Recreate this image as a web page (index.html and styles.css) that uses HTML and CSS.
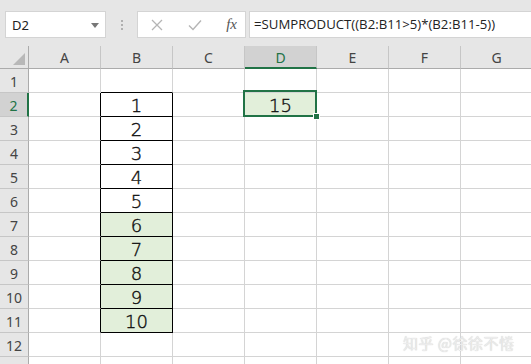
FILE: index.html
```html
<!DOCTYPE html>
<html lang="zh-CN">
<head>
    <meta charset="UTF-8">
    <title>SUMPRODUCT</title>
    <link rel="stylesheet" href="styles.css">
</head>
<body>
    <div class="toolbar">
        <div class="name-box">
            <span>D2</span>
            <svg class="drop" width="8" height="5" viewBox="0 0 8 5"><path d="M0 0h8L4 5z" fill="#777"/></svg>
        </div>
        <div class="grip"><i></i><i></i><i></i></div>
        <div class="buttons">
            <svg width="12" height="12" viewBox="0 0 12 12"><path d="M1 1l10 10M11 1L1 11" stroke="#b5b5b5" stroke-width="1.3"/></svg>
            <svg width="14" height="12" viewBox="0 0 14 12"><path d="M1 6.5l4 4L13 1.5" stroke="#b5b5b5" stroke-width="1.4" fill="none"/></svg>
            <span class="fx">fx</span>
        </div>
        <div class="formula">=SUMPRODUCT((B2:B11&gt;5)*(B2:B11-5))</div>
    </div>

    <div class="sheet">
        <div class="corner"><svg width="12" height="12" viewBox="0 0 12 12"><path d="M12 0v12H0z" fill="#b8b8b8"/></svg></div>
        <div class="col-head">A</div>
        <div class="col-head">B</div>
        <div class="col-head">C</div>
        <div class="col-head active">D</div>
        <div class="col-head">E</div>
        <div class="col-head">F</div>
        <div class="col-head">G</div>
    </div>
    <div class="sheet" id="rows"></div>

    <div class="watermark">知乎 @徐徐不惓</div>

    <script>
        // build rows 1-13, values 1..10 sit in B2:B11; row 13 is only half on screen
        const rows = document.getElementById('rows');
        for (let r = 1; r <= 13; r++) {
            const head = document.createElement('div');
            head.className = 'row-head' + (r === 2 ? ' active' : '');
            if (r < 13) head.textContent = r;
            rows.appendChild(head);
            for (let c = 0; c < 7; c++) {
                const cell = document.createElement('div');
                cell.className = 'cell';
                const inList = r >= 2 && r <= 11;
                if (c === 0 && inList) cell.classList.add('edge-right');
                if (c === 1 && r === 1) cell.classList.add('edge-bottom');
                if (c === 1 && inList) {
                    cell.classList.add('boxed');
                    cell.textContent = r - 1;
                    if (r - 1 > 5) cell.classList.add('green');
                }
                if (c === 3 && r === 2) {
                    cell.classList.add('green', 'selected');
                    cell.innerHTML = '15<div class="sel"><div class="handle"></div></div>';
                }
                rows.appendChild(cell);
            }
        }
    </script>
</body>
</html>
```

FILE: styles.css
```css
body {
    margin: 0;
    width: 531px;
    height: 364px;
    overflow: hidden;
    background: white;
    font-family: 'Noto Sans', 'Noto Sans CJK SC', sans-serif;
    position: relative;
}

.toolbar {
    height: 46px;
    background: #e6e6e6;
    display: flex;
    align-items: flex-start;
    padding-top: 11px;
    box-sizing: border-box;
}

.name-box {
    margin-left: 5px;
    width: 101px;
    height: 27px;
    box-sizing: border-box;
    background: white;
    border: 1px solid #d4d4d4;
    display: flex;
    align-items: center;
    justify-content: space-between;
    padding: 0 6px 0 6px;
    font-size: 13px;
    color: #222;
}

.drop {
    margin-top: 1px;
}

.grip {
    width: 31px;
    height: 27px;
    display: flex;
    flex-direction: column;
    align-items: center;
    justify-content: center;
    gap: 2px;
}

.grip i {
    width: 2px;
    height: 2px;
    background: #b0b0b0;
}

.buttons {
    width: 109px;
    height: 27px;
    box-sizing: border-box;
    background: white;
    border: 1px solid #d4d4d4;
    display: flex;
    align-items: center;
    justify-content: space-between;
    padding: 0 8px 0 13px;
}

.fx {
    font-family: 'Liberation Serif', serif;
    font-style: italic;
    font-size: 15px;
    color: #555;
}

.formula {
    flex: 1;
    margin-left: 3px;
    height: 27px;
    box-sizing: border-box;
    background: white;
    border: 1px solid #d4d4d4;
    border-right: none;
    padding-left: 4px;
    line-height: 25px;
    font-family: 'Open Sans', sans-serif;
    font-size: 13.2px;
    color: #222;
    white-space: nowrap;
}

.sheet {
    display: grid;
    grid-template-columns: 29px repeat(7, 72px);
}

.corner,
.col-head {
    height: 23px;
    box-sizing: border-box;
    background: #e6e6e6;
    border-bottom: 1px solid #ababab;
}

.corner {
    border-right: 1px solid #ababab;
    display: flex;
    align-items: flex-end;
    justify-content: flex-end;
    padding: 0 3px 3px 0;
}

.col-head {
    border-right: 1px solid #c6c6c6;
    text-align: center;
    font-size: 14px;
    line-height: 24px;
    color: #444;
}

.col-head.active {
    background: #d2d2d2;
    border-bottom: 2px solid #217346;
    color: #217346;
}

.row-head {
    height: 24px;
    box-sizing: border-box;
    background: #e6e6e6;
    border-right: 1px solid #ababab;
    border-bottom: 1px solid #c6c6c6;
    text-align: center;
    font-size: 14px;
    line-height: 26px;
    color: #444;
}

.row-head.active {
    background: #d2d2d2;
    border-right: 2px solid #217346;
    color: #217346;
}

.cell {
    height: 24px;
    box-sizing: border-box;
    border-right: 1px solid #d4d4d4;
    border-bottom: 1px solid #d4d4d4;
    text-align: center;
    font-family: 'DejaVu Sans', sans-serif;
    font-weight: 200;
    font-size: 18px;
    line-height: 25px;
    color: #111;
    -webkit-text-stroke: 0.4px #111;
}

.edge-right {
    border-right-color: #000;
}

.edge-bottom {
    border-bottom-color: #000;
}

.boxed {
    border-right-color: #000;
    border-bottom-color: #000;
}

.green {
    background: #e2efda;
}

.selected {
    position: relative;
}

.sel {
    position: absolute;
    top: -3px;
    left: -2px;
    right: -1px;
    bottom: -1px;
    border: 2px solid #217346;
}

.handle {
    position: absolute;
    right: -5px;
    bottom: -5px;
    width: 5px;
    height: 5px;
    background: #217346;
    border: 1px solid white;
}

.watermark {
    position: absolute;
    left: 403px;
    top: 332px;
    font-family: 'Noto Sans CJK SC', sans-serif;
    font-size: 15px;
    color: #ececec;
    text-shadow: 0 0 1px #c4c4c4;
    letter-spacing: 0.5px;
}
```
